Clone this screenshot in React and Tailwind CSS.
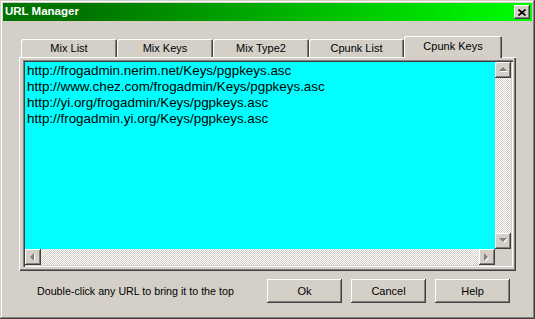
import React from 'react';

const raised = 'shadow-[inset_-1px_-1px_#404040,inset_1px_1px_#ffffff,inset_-2px_-2px_#808080]';

const urls = [
  'http://frogadmin.nerim.net/Keys/pgpkeys.asc',
  'http://www.chez.com/frogadmin/Keys/pgpkeys.asc',
  'http://yi.org/frogadmin/Keys/pgpkeys.asc',
  'http://frogadmin.yi.org/Keys/pgpkeys.asc',
];

const tabs = [
  { label: 'Mix List', w: 'w-[96px]' },
  { label: 'Mix Keys', w: 'w-[96px]' },
  { label: 'Mix Type2', w: 'w-[96px]' },
  { label: 'Cpunk List', w: 'w-[95px]' },
];

// disabled-looking arrow: grey triangle with a white offset shadow
const Arrow = ({ dir }) => {
  const pts = {
    up: '4,1 8,5 0,5',
    down: '0,1 8,1 4,5',
    left: '5,0 5,8 1,4',
    right: '1,0 1,8 5,4',
  }[dir];
  return (
    <svg width="9" height="9" viewBox="0 0 9 9">
      <polygon points={pts} fill="#ffffff" transform="translate(1 1)" />
      <polygon points={pts} fill="#808080" />
    </svg>
  );
};

const ScrollBtn = ({ dir }) => (
  <div className={`w-[16px] h-[16px] shrink-0 bg-[#d4d0c8] flex items-center justify-center ${raised}`}>
    <div className="pl-[1px] pt-[1px]">
      <Arrow dir={dir} />
    </div>
  </div>
);

const track = 'bg-[repeating-conic-gradient(#d4d0c8_0%_25%,#ffffff_0%_50%)] bg-size-[2px_2px]';

const Button = ({ children }) => (
  <button className={`w-[75px] h-[24px] bg-[#d4d0c8] text-[11px] text-black ${raised}`}>
    {children}
  </button>
);

const App = () => {
  return (
    <div className="w-[535px] h-[319px] bg-[#d4d0c8] p-[3px] flex flex-col font-['Liberation_Sans',Arial,sans-serif] shadow-[inset_-1px_-1px_#404040,inset_1px_1px_#d4d0c8,inset_-2px_-2px_#808080,inset_2px_2px_#ffffff]">
      {/* Title bar */}
      <div className="h-[18px] flex items-center justify-between bg-[linear-gradient(to_right,#007400_15%,#00ff00)]">
        <span className="pl-[2px] text-[11.5px] font-bold text-white leading-none">URL Manager</span>
        <div className={`w-[16px] h-[14px] mr-[2px] bg-[#d4d0c8] flex items-center justify-center ${raised}`}>
          <svg width="8" height="7" viewBox="0 0 8 7">
            <path d="M0.5 0.5 L7.5 6.5 M7.5 0.5 L0.5 6.5" stroke="#000" strokeWidth="1.6" />
          </svg>
        </div>
      </div>

      {/* Tabs + panel */}
      <div className="mt-[15px] ml-[16px] w-[497px]">
        <div className="h-[21px] flex items-end pl-[2px]">
          {tabs.map((t) => (
            <div
              key={t.label}
              className={`${t.w} h-[18px] flex items-center justify-center text-[11px] text-black rounded-t-[2px] shadow-[inset_1px_1px_#ffffff,inset_-1px_0_#404040,inset_-2px_0_#808080]`}
            >
              {t.label}
            </div>
          ))}
          <div className="relative z-10 w-[98px] h-[22px] -mb-[1px] pb-[2px] bg-[#d4d0c8] flex items-center justify-center text-[11px] text-black rounded-t-[2px] shadow-[inset_1px_1px_#ffffff,inset_-1px_0_#404040,inset_-2px_0_#808080]">
            Cpunk Keys
          </div>
        </div>

        <div className="h-[214px] pt-[3px] pl-[4px] shadow-[inset_1px_1px_#ffffff,inset_-1px_-1px_#404040,inset_-2px_-2px_#808080]">
          {/* List box */}
          <div className="w-[490px] h-[207px] p-[2px] shadow-[inset_1px_1px_#808080,inset_2px_2px_#404040,inset_-1px_-1px_#ffffff,inset_-2px_-2px_#d4d0c8]">
            <div className="flex h-[187px]">
              <div className="w-[470px] bg-[#00ffff] pl-[2px] pt-[1px] text-[13.4px] leading-[16px] text-black">
                {urls.map((u) => (
                  <div key={u}>{u}</div>
                ))}
              </div>
              <div className="w-[16px] flex flex-col">
                <ScrollBtn dir="up" />
                <div className={`flex-1 ${track}`} />
                <ScrollBtn dir="down" />
              </div>
            </div>
            <div className="flex h-[16px]">
              <ScrollBtn dir="left" />
              <div className={`flex-1 ${track}`} />
              <ScrollBtn dir="right" />
              <div className="w-[16px] h-[16px] bg-[#d4d0c8]" />
            </div>
          </div>
        </div>
      </div>

      {/* Bottom row */}
      <div className="mt-[8px] h-[24px] flex items-center pl-[34px]">
        <span className="text-[10.7px] text-black">Double-click any URL to bring it to the top</span>
        <div className="ml-auto mr-[22px] flex gap-[9px]">
          <Button>Ok</Button>
          <Button>Cancel</Button>
          <Button>Help</Button>
        </div>
      </div>
    </div>
  );
};

export default App;
